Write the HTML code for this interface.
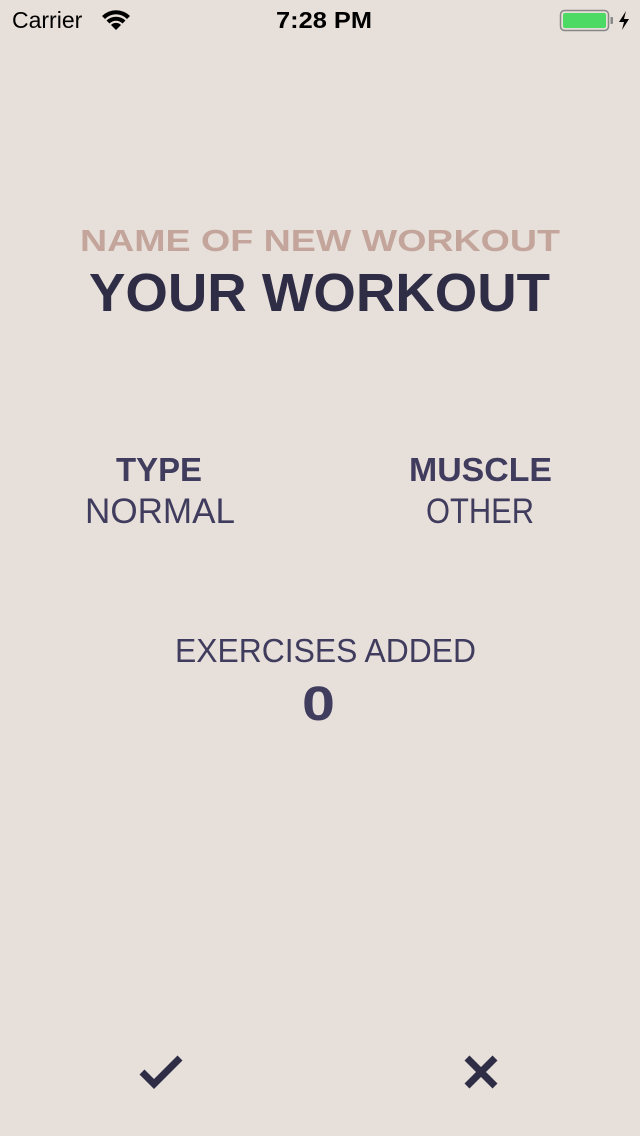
<!DOCTYPE html>
<html><head><meta charset="utf-8"><style>
html,body{margin:0;padding:0;background:#e7dfd9;width:640px;height:1136px;overflow:hidden}
svg{display:block}
</style></head><body>
<svg width="640" height="1136" viewBox="0 0 640 1136" xmlns="http://www.w3.org/2000/svg">
<rect width="640" height="1136" fill="#e7dfd9"/>
<g font-family="Liberation Sans, Arial, sans-serif" fill="#000">
<text x="12" y="28" font-size="23">Carrier</text>
<text x="276" y="28" font-size="23" font-weight="bold" textLength="96" lengthAdjust="spacingAndGlyphs">7:28 PM</text>
</g>
<!-- wifi -->
<g fill="#000">
<path d="M102 16 A20 20 0 0 1 130 16 L127 19 A15 15 0 0 0 105 19 Z"/>
<path d="M106.5 20.5 A14 14 0 0 1 125.5 20.5 L122.5 23.5 A9 9 0 0 0 109.5 23.5 Z"/>
<path d="M111 25 A7 7 0 0 1 121 25 L116 30 Z"/>
</g>
<!-- battery -->
<rect x="560.5" y="10.5" width="48" height="20" rx="4" fill="none" stroke="#888" stroke-width="1.5"/>
<rect x="563" y="13" width="43" height="15" rx="2" fill="#4cd964"/>
<path d="M610.5 17 h1.5 a1 1 0 0 1 1 1 v5 a1 1 0 0 1 -1 1 h-1.5z" fill="#888"/>
<path d="M626 11 L619 22 H624 L622 30 L629 19 H624 Z" fill="#000"/>

<g font-family="Liberation Sans, Arial, sans-serif" text-anchor="start">
<text x="80" y="251" font-size="31" font-weight="bold" fill="#c3a59b" textLength="480" lengthAdjust="spacingAndGlyphs">NAME OF NEW WORKOUT</text>
<text x="89" y="311" font-size="54" font-weight="bold" fill="#2f2d46" textLength="461" lengthAdjust="spacingAndGlyphs">YOUR WORKOUT</text>
<text x="116" y="481" font-size="33" font-weight="bold" fill="#403c5e" textLength="86" lengthAdjust="spacingAndGlyphs">TYPE</text>
<text x="409" y="481" font-size="33" font-weight="bold" fill="#403c5e" textLength="143" lengthAdjust="spacingAndGlyphs">MUSCLE</text>
<text x="85" y="523" font-size="35" fill="#403c5e" textLength="150" lengthAdjust="spacingAndGlyphs">NORMAL</text>
<text x="426" y="523" font-size="35" fill="#403c5e" textLength="108" lengthAdjust="spacingAndGlyphs">OTHER</text>
<text x="175" y="662" font-size="33" fill="#403c5e" textLength="301" lengthAdjust="spacingAndGlyphs">EXERCISES ADDED</text>
<text x="302" y="720" font-size="48" font-weight="bold" fill="#403c5e" textLength="33" lengthAdjust="spacingAndGlyphs">0</text>
</g>
<!-- check -->
<path d="M142 1072 L154 1084 L180 1058" fill="none" stroke="#2f2d46" stroke-width="7"/>
<!-- X -->
<path d="M467 1058 L495 1086 M495 1058 L467 1086" fill="none" stroke="#2f2d46" stroke-width="7"/>
</svg>
</body></html>
